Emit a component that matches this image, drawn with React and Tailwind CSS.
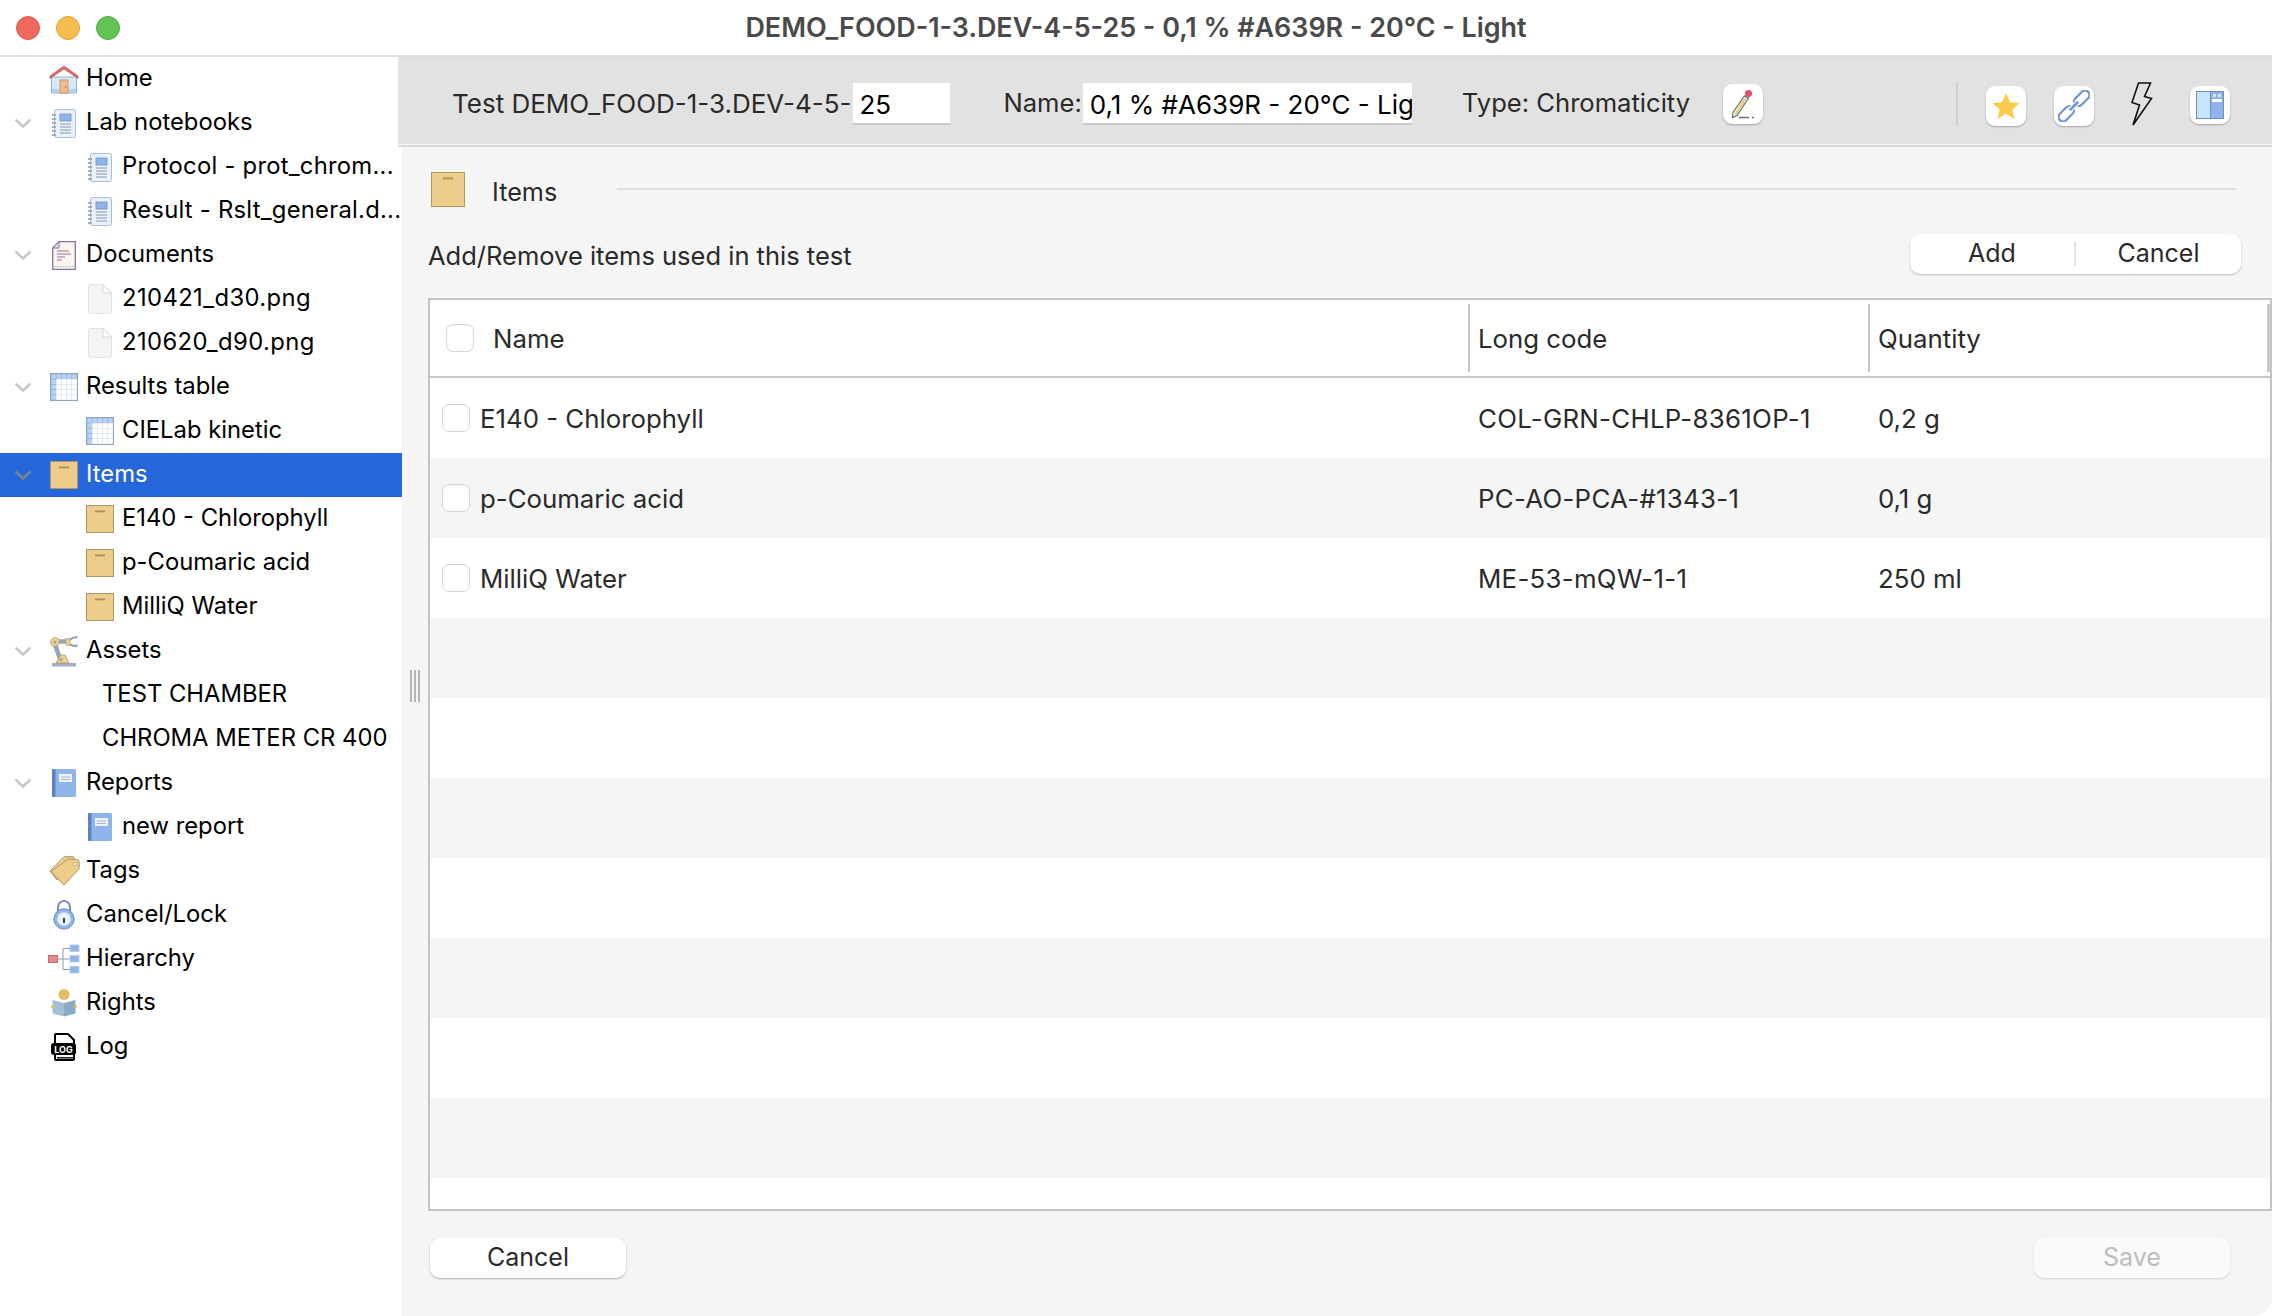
import React from "react";

const Chevron = ({ dark }) => (
  <svg width="18" height="10" viewBox="0 0 18 10" fill="none">
    <polyline points="1.5,1.5 9,8.5 16.5,1.5" stroke={dark ? "#7d8288" : "#c8c8c8"} strokeWidth="2.6" />
  </svg>
);

const Home = () => (
  <svg width="30" height="30" viewBox="0 0 30 30">
    <path d="M2.5 13 H27.5 V29 H2.5 Z" fill="#d8eafa" stroke="#8fb4dc" strokeWidth="1" />
    <rect x="3" y="25" width="24" height="3.6" fill="#b6d2ef" />
    <path d="M1 12 L15 2 L29 12 V14.5 L15 5 L1 14.5 Z" fill="#d9696b" stroke="#c85c5e" strokeWidth=".8" />
    <rect x="11" y="16" width="8" height="13" fill="#f2bd8d" stroke="#c79a6f" strokeWidth="1" />
    <circle cx="16.6" cy="23" r=".8" fill="#9a7350" />
  </svg>
);

const Notebook = () => (
  <svg width="24" height="29" viewBox="0 0 24 29">
    <rect x="2.5" y=".5" width="21" height="28" rx="2" fill="#e9f2fb" stroke="#a9bcd8" />
    <rect x="8" y="5" width="11" height="7" fill="#8fb4e8" stroke="#6f8fc6" strokeWidth=".8" />
    <path d="M8 15H19M8 18H19M8 21H19M8 24H19" stroke="#8d98a8" strokeWidth="1.2" />
    <path d="M0 6H4M0 10H4M0 14H4M0 18H4M0 22H4M0 26H4" stroke="#8b9bb5" strokeWidth="1.3" />
  </svg>
);

const DocIcon = () => (
  <svg width="24" height="29" viewBox="0 0 24 29">
    <path d="M7 .7 H23.3 V28.3 H.7 V7 Z" fill="#fbf5ec" stroke="#8b6fa8" strokeWidth="1.3" />
    <path d="M7 .7 V7 H.7 Z" fill="#e5daf0" stroke="#8b6fa8" strokeWidth="1" />
    <path d="M5 10H17M5 13H19M5 16H13M5 19H10" stroke="#8a70ab" strokeWidth="1" />
    <path d="M2 25.5H22" stroke="#b7a3c8" strokeWidth="1.2" strokeDasharray="1.5 1.5" />
  </svg>
);

const FileIcon = () => (
  <svg width="24" height="30" viewBox="0 0 24 30">
    <path d="M2 .5 H15 L23.5 9 V27 Q23.5 29.5 21 29.5 H3 Q.5 29.5 .5 27 V2 Q.5 .5 2 .5 Z" fill="#f4f4f4" stroke="#e2e2e2" />
    <path d="M15 .5 V9 H23.5 Z" fill="#ffffff" stroke="#cfcfcf" strokeWidth=".8" />
  </svg>
);

const GridIcon = () => {
  const cells = [];
  for (let r = 0; r < 5; r++) {
    for (let c = 0; c < 5; c++) {
      cells.push(
        <rect
          key={`${r}-${c}`}
          x={1 + c * 5.2}
          y={1 + r * 5.2}
          width="5.2"
          height="5.2"
          fill={r === 0 || c === 0 ? "#b6d4f4" : "#ffffff"}
          stroke={r === 0 || c === 0 ? "#8fa9cf" : "#dbe3ee"}
          strokeWidth=".6"
        />
      );
    }
  }
  return (
    <svg width="28" height="28" viewBox="0 0 28 28">
      {cells}
      <rect x=".5" y=".5" width="27" height="27" fill="none" stroke="#8fa5c6" />
    </svg>
  );
};

const BoxIcon = ({ w = 28, h = 28 }) => (
  <svg width={w} height={h} viewBox={`0 0 ${w} ${h}`}>
    <rect x=".5" y=".5" width={w - 1} height={h - 1} fill="#eecd8b" stroke="#ad9765" />
    <rect x={w / 2 - 5} y="5.5" width="10" height="1.8" fill="#a88f5e" />
  </svg>
);

const Robot = () => (
  <svg width="30" height="31" viewBox="0 0 30 31">
    <rect x="3" y="27" width="24" height="3.5" fill="#9db0c8" />
    <path d="M6 8 L12 26" stroke="#93a4bd" strokeWidth="4.5" />
    <path d="M6 5.5 H18" stroke="#93a4bd" strokeWidth="4.5" />
    <path d="M7 27 L11.5 19 L16 19 L20 27 Z" fill="#eed28e" stroke="#a99a6c" strokeWidth=".8" />
    <circle cx="12" cy="23.5" r="1.6" fill="#8ca0bc" />
    <circle cx="6" cy="6" r="4.4" fill="#eed28e" stroke="#a99a6c" strokeWidth=".8" />
    <circle cx="6" cy="6" r="1.5" fill="#8ca0bc" />
    <rect x="17" y="2.5" width="4" height="7" fill="#eed28e" stroke="#a99a6c" strokeWidth=".6" />
    <path d="M21 4 Q24 .5 28.5 1.5 M21 8 Q24 11 28.5 9.5" fill="none" stroke="#8ca0bc" strokeWidth="2" />
  </svg>
);

const Report = () => (
  <svg width="24" height="28" viewBox="0 0 24 28">
    <rect x="0" y="0" width="24" height="28" rx="1.5" fill="#8fb4ea" />
    <rect x="0" y="0" width="3.5" height="28" rx="1" fill="#5e83bd" />
    <rect x="7" y="5" width="13" height="8" fill="#eef3fb" />
    <path d="M9 8H18M9 10.5H18" stroke="#a7b6cc" strokeWidth="1" />
  </svg>
);

const Tags = () => (
  <svg width="31" height="30" viewBox="0 0 31 30">
    <path d="M15 .7 L24 .7 Q25.5 1 25.5 3 L25.5 5 L8 24 L1 15 Z" fill="#e9cd91" stroke="#ae9766" />
    <path d="M19 3 L28 3.5 Q30.5 4 30.3 6.5 L30 13 L15 29 L2 15.5 Z" fill="#eecd8b" stroke="#ae9766" />
    <circle cx="26" cy="8" r="1.7" fill="#fff" stroke="#ae9766" strokeWidth=".7" />
  </svg>
);

const Lock = () => (
  <svg width="22" height="30" viewBox="0 0 22 30">
    <path d="M5 12 V7 A6 6 0 0 1 17 7 V12" fill="none" stroke="#7d8ea8" strokeWidth="2" />
    <circle cx="11" cy="19" r="10.2" fill="#8fb4ea" stroke="#6f8ec4" />
    <circle cx="11" cy="19" r="6.8" fill="#e6f1fb" />
    <rect x="10" y="18" width="2" height="5" fill="#333d4d" />
  </svg>
);

const Hierarchy = () => (
  <svg width="32" height="30" viewBox="0 0 32 30">
    <path d="M10 15H22M15 4.5V25.5H22M15 4.5H22" fill="none" stroke="#8d99ad" strokeWidth="1" />
    <rect x=".5" y="11.5" width="9" height="7" fill="#e8898a" stroke="#c96a6c" />
    <rect x="22" y="1" width="9" height="6.5" fill="#8fb4ea" stroke="#b7cdec" />
    <rect x="22" y="11.5" width="9" height="6.5" fill="#8fb4ea" stroke="#b7cdec" />
    <rect x="22" y="22.5" width="9" height="6.5" fill="#8fb4ea" stroke="#b7cdec" />
  </svg>
);

const Rights = () => (
  <svg width="26" height="28" viewBox="0 0 26 28">
    <circle cx="13" cy="5.5" r="5.5" fill="#e3bc69" />
    <path d="M1.5 11 L13 14 V27.5 L1.5 24.5 Z" fill="#a4bfd6" />
    <path d="M24.5 11 L13 14 V27.5 L24.5 24.5 Z" fill="#89a9c4" />
    <circle cx="1.8" cy="17.5" r="1.8" fill="#e3bc69" />
    <circle cx="24.2" cy="17.5" r="1.8" fill="#e3bc69" />
  </svg>
);

const LogIcon = () => (
  <svg width="26" height="28" viewBox="0 0 26 28">
    <path d="M4 10 V2 Q4 1 5 1 H17 L23 7 V26 Q23 27 22 27 H5 Q4 27 4 26 V22" fill="#fff" stroke="#000" strokeWidth="2" />
    <rect x="0" y="10" width="25" height="12" rx="3" fill="#000" />
    <text x="12.5" y="19.6" textAnchor="middle" fontSize="9" fontWeight="700" fill="#fff" fontFamily="Inter, sans-serif">LOG</text>
    <path d="M6 24.8H22" stroke="#000" strokeWidth="1.4" />
  </svg>
);

const tree = [
  { l: 0, icon: <Home />, t: "Home" },
  { l: 0, c: 1, icon: <Notebook />, t: "Lab notebooks" },
  { l: 1, icon: <Notebook />, t: "Protocol - prot_chrom...", tr: "tracking-[0.25px]" },
  { l: 1, icon: <Notebook />, t: "Result - Rslt_general.d...", tr: "tracking-[0.25px]" },
  { l: 0, c: 1, icon: <DocIcon />, t: "Documents" },
  { l: 1, icon: <FileIcon />, t: "210421_d30.png", tr: "tracking-[0.4px]" },
  { l: 1, icon: <FileIcon />, t: "210620_d90.png", tr: "tracking-[0.4px]" },
  { l: 0, c: 1, icon: <GridIcon />, t: "Results table" },
  { l: 1, icon: <GridIcon />, t: "CIELab kinetic" },
  { l: 0, c: 1, icon: <BoxIcon />, t: "Items", sel: 1 },
  { l: 1, icon: <BoxIcon />, t: "E140 - Chlorophyll" },
  { l: 1, icon: <BoxIcon />, t: "p-Coumaric acid" },
  { l: 1, icon: <BoxIcon />, t: "MilliQ Water" },
  { l: 0, c: 1, icon: <Robot />, t: "Assets" },
  { l: 2, t: "TEST CHAMBER" },
  { l: 2, t: "CHROMA METER CR 400" },
  { l: 0, c: 1, icon: <Report />, t: "Reports" },
  { l: 1, icon: <Report />, t: "new report" },
  { l: 0, icon: <Tags />, t: "Tags" },
  { l: 0, icon: <Lock />, t: "Cancel/Lock" },
  { l: 0, icon: <Hierarchy />, t: "Hierarchy" },
  { l: 0, icon: <Rights />, t: "Rights" },
  { l: 0, icon: <LogIcon />, t: "Log" },
];

function TreeRow({ r }) {
  return (
    <div className={`flex h-[44px] items-center whitespace-nowrap text-[23.8px] ${r.sel ? "bg-[#2566db] text-white" : "text-black"}`}>
      {r.l === 0 && (
        <div className="flex w-[48px] shrink-0 justify-start pl-[14px]">{r.c ? <Chevron dark={r.sel} /> : null}</div>
      )}
      {r.l === 1 && <div className="w-[84px] shrink-0" />}
      {r.l === 2 && <div className="w-[102px] shrink-0" />}
      {r.l !== 2 && <div className="mr-[6px] flex w-[32px] shrink-0 items-center justify-center">{r.icon}</div>}
      <span className={`pb-[3px] ${r.tr || ""}`}>{r.t}</span>
    </div>
  );
}

const IconBtn = ({ children, h = "h-[40px]", cls = "" }) => (
  <div className={`flex w-[40px] ${h} ${cls} items-center justify-center rounded-[9px] bg-white shadow-[0_1px_2px_rgba(0,0,0,0.28)]`}>{children}</div>
);

const Pencil = () => (
  <svg width="26" height="32" viewBox="0 0 26 32">
    <path d="M14.5 8 L18.5 10 L7 27.5 L2.5 29.5 L3 24.5 Z" fill="#f8f8f8" stroke="#5c6068" strokeWidth="1.1" />
    <path d="M15.8 10 L5.5 26" stroke="#ecc24c" strokeWidth="1.6" />
    <circle cx="18.5" cy="5.5" r="3.6" fill="#e4506a" />
    <path d="M9 29.5H19M22 29.5H24" stroke="#6b6f76" strokeWidth="1.5" />
  </svg>
);

const Star = () => (
  <svg width="28" height="28" viewBox="0 0 28 28">
    <path d="M14 1 L18 10.2 L27.6 11 L20.4 17.4 L22.6 27 L14 21.8 L5.4 27 L7.6 17.4 L.4 11 L10 10.2 Z" fill="#fbcb4e" />
  </svg>
);

const LinkIcon = () => (
  <svg width="32" height="32" viewBox="0 0 32 32">
    <g transform="rotate(-45 16 16)">
      <rect x="-4" y="11.5" width="18" height="9" rx="4.5" fill="#ffffff" stroke="#7297d4" strokeWidth="2.3" />
      <rect x="18" y="11.5" width="18" height="9" rx="4.5" fill="#ffffff" stroke="#7297d4" strokeWidth="2.3" />
      <path d="M10 16 H22" stroke="#ffffff" strokeWidth="5" />
      <path d="M10 16 H22" stroke="#7297d4" strokeWidth="2.6" />
    </g>
  </svg>
);

const Bolt = () => (
  <svg width="22" height="44" viewBox="0 0 22 44" className="mx-[9px]">
    <path d="M7.5 1 H19.5 L13.5 14.5 L20.5 16.5 L2 43 L8.5 23 L1 20.5 Z" fill="none" stroke="#111" strokeWidth="1.6" />
    <path d="M2 43 L8.5 23 L6 33 Z" fill="#111" />
  </svg>
);

const PanelIcon = () => (
  <svg width="28" height="28" viewBox="0 0 28 28">
    <rect x=".5" y=".5" width="27" height="27" fill="#c6e4fb" stroke="#6c8cc4" />
    <rect x="14.5" y=".5" width="13" height="27" fill="#8fb4ea" stroke="#6c8cc4" />
    <rect x="17" y="3" width="3" height="3" fill="#dbe8f8" />
    <rect x="22" y="3" width="3" height="3" fill="#dbe8f8" />
    <rect x="16" y="8" width="10" height="3" fill="#ffffff" />
  </svg>
);

const Check = () => (
  <div className="h-[28px] w-[28px] shrink-0 rounded-[7px] border border-[#d6d6d6] bg-white shadow-[inset_0_1px_1px_rgba(0,0,0,0.04)]" />
);

const rows = [
  ["E140 - Chlorophyll", "COL-GRN-CHLP-8361OP-1", "0,2 g"],
  ["p-Coumaric acid", "PC-AO-PCA-#1343-1", "0,1 g"],
  ["MilliQ Water", "ME-53-mQW-1-1", "250 ml"],
  ...Array.from({ length: 8 }, () => ["", "", ""]),
];

export default function App() {
  return (
    <div className="flex h-[1316px] w-[2272px] flex-col overflow-hidden bg-white [font-family:Inter,sans-serif]">
      <div className="flex h-[57px] shrink-0 items-center border-b-2 border-[#dcdcdc]">
        <div className="flex w-[0px] shrink-0 items-center">
          <div className="ml-[16px] flex gap-[16px]">
            <div className="h-[24px] w-[24px] shrink-0 rounded-full border border-[#dc5c52] bg-[#ee6a5f]" />
            <div className="h-[24px] w-[24px] shrink-0 rounded-full border border-[#dea234] bg-[#f5bd4f]" />
            <div className="h-[24px] w-[24px] shrink-0 rounded-full border border-[#52ab47] bg-[#61c454]" />
          </div>
        </div>
        <div className="flex-1 text-center text-[26.9px] font-semibold text-[#4a4a4a]">
          DEMO_FOOD-1-3.DEV-4-5-25 - 0,1 % #A639R - 20°C - Light
        </div>
      </div>
      <div className="flex min-h-0 flex-1">
        <div className="w-[402px] shrink-0 bg-white">
          {tree.map((r, i) => (
            <TreeRow key={i} r={r} />
          ))}
        </div>
        <div className="relative flex min-w-0 flex-1 flex-col rounded-br-[18px] bg-[#f5f5f5]">
          <div className="-ml-[4px] flex h-[87px] shrink-0 items-center bg-[#e2e2e2] pl-[54px] pr-[42px] pt-[7px] text-[26px] text-[#2a2a2a]">
            <span className="whitespace-nowrap pb-[2px]">Test DEMO_FOOD-1-3.DEV-4-5-</span>
            <div className="ml-[2px] flex h-[42px] w-[97px] shrink-0 items-center border-b-2 border-[#c8c8c8] bg-white pl-[6px] pt-[3px] text-black">25</div>
            <span className="ml-[53px] pb-[2px] text-[25.6px]">Name:</span>
            <div className="ml-[1px] flex h-[42px] w-[329px] shrink-0 items-center overflow-hidden whitespace-nowrap border-b-2 border-[#c8c8c8] bg-white pl-[7px] pt-[3px] text-black">0,1 % #A639R - 20°C - Light</div>
            <span className="ml-[50px] w-[261px] shrink-0 whitespace-nowrap pb-[2px] text-[25.6px]">Type: Chromaticity</span>
            <IconBtn><Pencil /></IconBtn>
            <div className="flex-1" />
            <div className="h-[44px] w-[2px] bg-[#cfcfcf]" />
            <div className="ml-[28px] flex items-center gap-[28px]">
              <IconBtn cls="mt-[4px]"><Star /></IconBtn>
              <IconBtn cls="mt-[4px]"><LinkIcon /></IconBtn>
              <Bolt />
              <IconBtn h="h-[38px]" cls="mt-[2px]"><PanelIcon /></IconBtn>
            </div>
          </div>
          <div className="-ml-[4px] h-[3px] shrink-0 border-b-2 border-[#dcdcdc] bg-[#f5f5f5]" />
          <div className="flex min-h-0 flex-1 flex-col pl-[26px]">
            <div className="mt-[25px] flex h-[35px] shrink-0 items-start pl-[3px] pr-[36px] text-[#2a2a2a]">
              <BoxIcon w={34} h={35} />
              <span className="ml-[27px] mt-[1px] text-[25.2px] leading-[38px]">Items</span>
              <div className="ml-[60px] mt-[16px] h-[2px] flex-1 bg-[#dedede]" />
            </div>
            <div className="mt-[27px] flex h-[40px] shrink-0 items-center justify-between pr-[31px]">
              <span className="pt-[5px] text-[25.5px] text-[#2a2a2a]">Add/Remove items used in this test</span>
              <div className="flex h-[40px] w-[331px] items-center rounded-[10px] bg-white text-[25px] text-[#2a2a2a] shadow-[0_1px_2px_rgba(0,0,0,0.25)]">
                <div className="flex-1 text-center">Add</div>
                <div className="h-[24px] w-[2px] bg-[#e3e3e3]" />
                <div className="w-[165px] text-center">Cancel</div>
              </div>
            </div>
            <div className="mt-[24px] flex h-[913px] shrink-0 flex-col overflow-hidden border-2 border-[#c4c4c4] bg-white text-[25.8px] text-[#2a2a2a]">
              <div className="flex h-[78px] shrink-0 items-center border-b-2 border-[#c8c8c8]">
                <div className="flex w-[1038px] items-center pl-[16px]">
                  <Check />
                  <span className="ml-[19px] pt-[3px]">Name</span>
                </div>
                <div className="flex h-[68px] w-[400px] items-center border-l-2 border-[#c8c8c8] pl-[8px] pt-[3px]">Long code</div>
                <div className="flex h-[68px] flex-1 items-center justify-between border-l-2 border-[#c8c8c8] pl-[8px] pt-[3px]">
                  <span>Quantity</span>
                  <div className="-mt-[3px] h-[68px] w-[3px] bg-[#c8c8c8]" />
                </div>
              </div>
              {rows.map((r, i) => (
                <div key={i} className={`flex h-[80px] shrink-0 items-center ${i % 2 ? "bg-[#f4f5f5]" : "bg-white"}`}>
                  <div className="flex w-[1038px] items-center pl-[12px]">
                    {r[0] && <Check />}
                    <span className="ml-[10px] pt-[3px]">{r[0]}</span>
                  </div>
                  <div className="w-[400px] pl-[10px] pt-[3px] tracking-[0.3px]">{r[1]}</div>
                  <div className="flex-1 pl-[10px] pt-[3px]">{r[2]}</div>
                </div>
              ))}
            </div>
            <div className="mt-[27px] flex h-[40px] shrink-0 justify-between pl-[2px] pr-[42px] text-[25px]">
              <div className="flex w-[196px] items-center justify-center rounded-[10px] bg-white text-[#2a2a2a] shadow-[0_1px_2px_rgba(0,0,0,0.3)]">Cancel</div>
              <div className="flex w-[196px] items-center justify-center rounded-[10px] bg-[#fafafa] text-[#bdbdbd] shadow-[0_1px_2px_rgba(0,0,0,0.15)]">Save</div>
            </div>
          </div>
          <div className="absolute left-[8px] top-[613px] flex h-[32px] w-[10px] justify-between">
            <div className="w-[2px] bg-[#b5b5b5]" />
            <div className="w-[2px] bg-[#b5b5b5]" />
            <div className="w-[2px] bg-[#b5b5b5]" />
          </div>
        </div>
      </div>
    </div>
  );
}
